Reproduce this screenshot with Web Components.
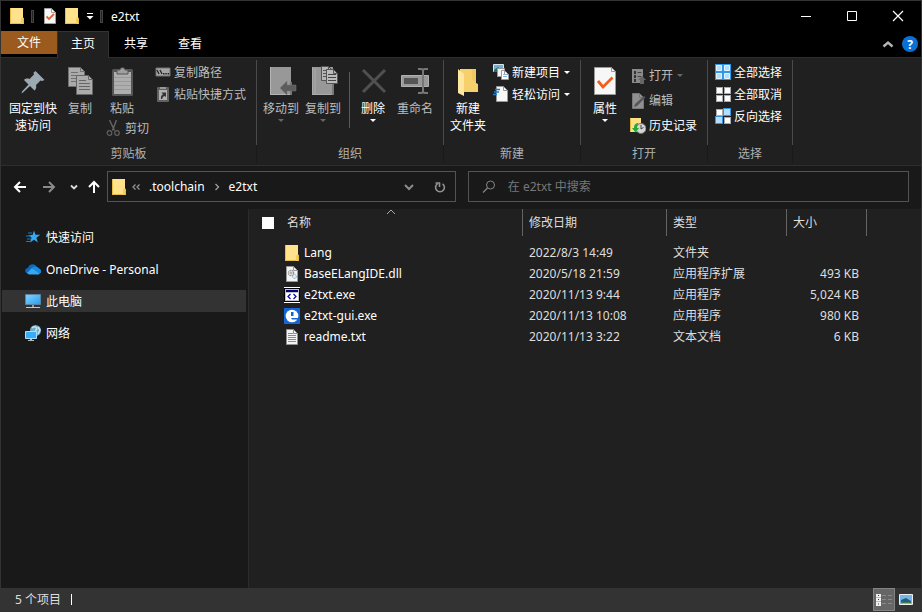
<!DOCTYPE html>
<html lang="zh-CN">
<head>
<meta charset="utf-8">
<meta name="viewport" content="width=device-width, initial-scale=1">
<title>e2txt</title>
<style>
    :root {
        --pane: #191919;
        --surface: #202020;
        --line: #535353;
        --edge: #2e2e2e;
    }

    body {
        margin: 0;
        background: var(--pane);
        color: #fff;
        font: 12px/17px "Noto Sans", "Noto Sans CJK SC", sans-serif;
    }
</style>
</head>
<body>
<fx-window>
    <fx-titlebar slot="title">e2txt</fx-titlebar>
    <fx-tabs slot="tabs"></fx-tabs>

    <fx-ribbon slot="ribbon">
        <fx-group label="剪贴板">
            <fx-command icon="pin" class="pin">固定到快<br>速访问</fx-command>
            <fx-command icon="copy" off>复制</fx-command>
            <fx-stack class="paste">
                <fx-command icon="paste" off>粘贴</fx-command>
                <fx-command icon="cut" small off>剪切</fx-command>
            </fx-stack>
            <fx-stack class="small">
                <fx-command icon="path" small off>复制路径</fx-command>
                <fx-command icon="shortcut" small off>粘贴快捷方式</fx-command>
            </fx-stack>
        </fx-group>
        <fx-group label="组织">
            <fx-command icon="moveto" menu off>移动到</fx-command>
            <fx-command icon="copyto" menu off>复制到</fx-command>
            <fx-rule></fx-rule>
            <fx-command icon="delete" menu>删除</fx-command>
            <fx-command icon="rename" off>重命名</fx-command>
        </fx-group>
        <fx-group label="新建">
            <fx-command icon="newfolder">新建<br>文件夹</fx-command>
            <fx-stack class="small">
                <fx-command icon="newitem" small menu>新建项目</fx-command>
                <fx-command icon="easy" small menu>轻松访问</fx-command>
            </fx-stack>
        </fx-group>
        <fx-group label="打开">
            <fx-command icon="props" menu>属性</fx-command>
            <fx-stack class="small loose">
                <fx-command icon="open" small menu off>打开</fx-command>
                <fx-command icon="edit" small off>编辑</fx-command>
                <fx-command icon="history" small>历史记录</fx-command>
            </fx-stack>
        </fx-group>
        <fx-group label="选择">
            <fx-stack class="small">
                <fx-command icon="all" small>全部选择</fx-command>
                <fx-command icon="none" small>全部取消</fx-command>
                <fx-command icon="invert" small>反向选择</fx-command>
            </fx-stack>
        </fx-group>
    </fx-ribbon>

    <fx-addressbar slot="address"></fx-addressbar>

    <fx-nav slot="nav">
        <fx-nav-item icon="star">快速访问</fx-nav-item>
        <fx-nav-item icon="cloud">OneDrive - Personal</fx-nav-item>
        <fx-nav-item icon="pc" current>此电脑</fx-nav-item>
        <fx-nav-item icon="network">网络</fx-nav-item>
    </fx-nav>

    <fx-files slot="files"></fx-files>
    <fx-status slot="status">5 个项目</fx-status>
</fx-window>

<script>
const page = (x, y, w, h, fill, stroke) =>
    `<path d="M${x + .5} ${y + .5}h${w - 5}l4 4v${h - 5}h-${w - 1}z" fill="${fill}" stroke="${stroke}"/><path d="M${x + w - 4.5} ${y + .5}v4h4" fill="none" stroke="${stroke}"/>`

const tile = (x, y, on) =>
    `<rect x="${x + .5}" y="${y + .5}" width="6" height="6" fill="${on ? '#b5defc' : '#fff'}" stroke="${on ? '#3297e8' : '#aaa'}"/>`

// name: [width, height, markup]
const ICONS = {
    folder: [16, 16, `<path d="M1 0h13v10h1v6H1z" fill="#ffe28b"/><path d="M1.500 0v15.500h12v-5.500h1v6" fill="none" stroke="#e8bd43"/><path d="M12 10h2v6h-2z" fill="#f3cd5c"/>`],
    check: [16, 16, `${page(2, 0, 12, 16, '#f7f7f7', '#a0a0a0')}<path d="M4.500 8.500l2.500 2.500 5-5" fill="none" stroke="#e8622c" stroke-width="1.800"/>`],
    quick: [8, 8, `<path d="M1 1.500h6" stroke="#fff"/><path d="M0.500 4h7L4 7.500z" fill="#fff"/>`],
    min: [12, 12, `<path d="M1 6.500h10" stroke="#fff"/>`],
    max: [12, 12, `<path d="M1.500 1.500h9v9h-9z" fill="none" stroke="#fff"/>`],
    close: [12, 12, `<path d="M1 1l10 10M11 1L1 11" stroke="#fff" stroke-width="1.200"/>`],
    collapse: [12, 12, `<path d="M1.500 8.500L6 4.500l4.500 4" fill="none" stroke="#b5b5b5" stroke-width="2.400"/>`],
    pin: [32, 32, `<path d="M23.500 5l9 9-2.500 1-1.500-.5-4.500 4.500c.7 2.500 0 4.300-1.500 5.500l-4.500-4.500-7 6.500-1.500 1 .5-2 6.500-7-4.500-4.500c1.500-1.500 3.500-1.800 5.500-1l4.500-4.500-.5-1.700z" transform="translate(-5 0)" fill="#9aa9b2"/>`],
    copy: [32, 32, `${page(4, 1, 17, 20, '#ababab', '#707070')}<path d="M7 6.500h7M7 9.500h10M7 12.500h10M7 15.500h10" stroke="#707070"/>${page(12, 9, 17, 20, '#ababab', '#666')}<path d="M15 14.500h7M15 17.500h11M15 20.500h11M15 23.500h11" stroke="#666"/>`],
    paste: [32, 32, `<rect x="6" y="3" width="21" height="27" rx="1.500" fill="#555"/><path d="M8 6h17v22H8z" fill="#aeaeae"/><path d="M8 11.500h17M8 15.500h17M8 19.500h17M8 23.500h17" stroke="#999"/><path d="M11 4h3c0-3 5-3 5 0h3v4H11z" fill="#a0a0a0" stroke="#555"/>`],
    moveto: [32, 32, `<path d="M5 1h21v28H5z" fill="#989898"/><path d="M5.500 1v27.500H26" fill="none" stroke="#b5b5b5"/><path d="M26 16v13" stroke="#787878" stroke-width="2"/><path d="M15 22l7-7v4h9v6h-9v4z" fill="#5d5d5d" stroke="#777" stroke-width=".5"/>`],
    copyto: [32, 32, `<path d="M5 1h21v28H5z" fill="#989898"/><path d="M5.500 1v27.500H24M8 2v26" fill="none" stroke="#ababab"/><path d="M26 16v13" stroke="#777" stroke-width="2"/>${page(14, 0, 12, 15, '#b5b5b5', '#555')}<path d="M16 4.500h3M16 7.500h3M16 10.500h3" stroke="#555"/>${page(19, 3, 12, 15, '#bbb', '#555')}<path d="M21 8.500h8M21 11.500h8M21 14.500h8" stroke="#444"/>`],
    delete: [32, 32, `<path d="M6 4l22 22M28 4L6 26" stroke="#505050" stroke-width="3"/>`],
    rename: [32, 32, `<path d="M2.500 9.500h27v11h-27z" fill="#999" stroke="#b0b0b0"/><path d="M5 12h14v6H5z" fill="#555"/><path d="M22 3h3q2 0 2 2v20q0 2-2 2h-3M32 3h-3q-2 0-2 2m0 20q0 2 2 2h3" transform="translate(-3 0)" fill="none" stroke="#777" stroke-width="2"/>`],
    newfolder: [32, 32, `<path d="M8 3h16v14l2 1v8H8z" fill="#f6d06d"/><path d="M20 3h4v14l-4-4z" fill="#f0c862"/><path d="M6 3l6 5v22l-6-3z" fill="#ffe7a0"/>`],
    props: [32, 32, `${page(5, 1, 22, 28, '#f7f7f7', '#999')}<path d="M9 15l5 6L23.500 11.500" fill="none" stroke="#f0601c" stroke-width="2.800"/>`],
    cut: [16, 16, `<path d="M3.500 0l5 10.500M10.500 0l-4 10.500" stroke="#666" stroke-width="1.400"/><circle cx="3.500" cy="13" r="2.300" fill="none" stroke="#606060" stroke-width="1.200"/><circle cx="11" cy="13" r="2.300" fill="none" stroke="#606060" stroke-width="1.200"/>`],
    path: [16, 16, `<path d="M1 4h14v8H1z" fill="#a6a6a6" stroke="#707070"/><path d="M2 6l2 4M5 6l2 4" stroke="#222" stroke-width="1.300"/><path d="M8 9h1.500v1.500H8zM10.300 9h1.500v1.500h-1.500zM12.600 9h1.500v1.500h-1.500z" fill="#222"/>`],
    shortcut: [16, 16, `<rect x="2" y="1" width="12" height="15" rx="1" fill="#606060"/><path d="M4 4h8v10H4z" fill="#b0b0b0"/><path d="M5 1h6v2H5z" fill="#999"/><path d="M6 13c-.5-2.500.5-4 2-4.500L6.500 6.500H11V11L9.700 10C8 10.500 7 11.500 7.500 13z" fill="#333"/>`],
    newitem: [16, 16, `<path d="M.5.500h10v7H.5z" fill="#75aed3" stroke="#d7e5ed"/><path d="M1 6l4-3 5 5H1z" fill="#2d6d68"/><path d="M4.500 4.500h7v8h-7z" fill="#f5f5f5" stroke="#999"/>${page(8, 6, 8, 10, '#fff', '#999')}<path d="M10 10.500h4M10 12.500h4" stroke="#8fb5df"/>`],
    easy: [16, 16, `${page(3, 0, 12, 16, '#f8f8f8', '#999')}<path d="M2 3.500h5M1 6h5M0 8.500h4" stroke="#1d7bd1" stroke-width="1.400"/>`],
    open: [16, 16, `<path d="M2 1h11v14H2z" fill="#8a8a8a"/><path d="M4 3h2v3H4zM4 7h2v3H4zM4 11h2v3H4z" fill="#333"/><path d="M7.500 4.500h4M7.500 8.500h4" stroke="#444"/><path d="M12 8l4 4h-2v4h-4v-4H8z" fill="#666"/>`],
    edit: [16, 16, `${page(2, 0, 12, 16, '#909090', '#777')}<path d="M4 14l1-3L14 3l1.500 1.500L7 13z" fill="#555"/>`],
    history: [16, 16, `<path d="M0 0h11v14H0z" fill="#ffe082"/><path d="M.500.500v13" stroke="#e3b744"/><circle cx="11" cy="10.500" r="5" fill="#d5d5d5" stroke="#777"/><path d="M11 7v4l2.500-1.500" fill="none" stroke="#444"/><path d="M8.500 5C5 5 4 7.500 4 10H2l3.500 4.500L9 10H7c0-2 .5-3 1.500-5z" fill="#25a83a"/>`],
    all: [16, 16, `<path d="M0 0h16v16H0z" fill="#3297e8"/><path d="M1.500 1.500h5v5h-5zM9.500 1.500h5v5h-5zM1.500 9.500h5v5h-5zM9.500 9.500h5v5h-5z" fill="#b5defc" stroke="#e4f4ff"/>`],
    none: [16, 16, `<g transform="translate(1 1)">${tile(0, 0)}${tile(8, 0)}${tile(0, 8)}${tile(8, 8)}</g>`],
    invert: [16, 16, `${tile(1, 1)}<path d="M8.500.500h7v7h-7zM.500 8.500h7v7h-7z" fill="#b5defc" stroke="#3297e8"/>${tile(9, 9)}`],
    back: [16, 16, `<path d="M14 8H3M8 3L3 8l5 5" fill="none" stroke="#fff" stroke-width="2"/>`],
    forward: [16, 16, `<path d="M2 8h11M8 3l5 5-5 5" fill="none" stroke="#8a8a8a" stroke-width="2"/>`],
    recent: [8, 8, `<path d="M1 2.500l3 3 3-3" fill="none" stroke="#ddd" stroke-width="1.800"/>`],
    up: [16, 16, `<path d="M8 14V3M3 8l5-5 5 5" fill="none" stroke="#fff" stroke-width="2"/>`],
    crumbs: [10, 8, `<path d="M4.500 1.500L2 4l2.500 2.500M8.500 1.500L6 4l2.500 2.500" fill="none" stroke="#999" stroke-width="1.200"/>`],
    next: [8, 8, `<path d="M2.500 1L5.500 4l-3 3" fill="none" stroke="#999" stroke-width="1.400"/>`],
    down: [12, 12, `<path d="M2 4l4 4 4-4" fill="none" stroke="#8c8c8c" stroke-width="2"/>`],
    refresh: [12, 12, `<path d="M3.500 2.800A4.400 4.400 0 1 0 8.500 2.800M1.500 2h4v4" fill="none" stroke="#929292" stroke-width="1.600"/>`],
    search: [14, 14, `<circle cx="8.500" cy="5" r="4" fill="none" stroke="#858585"/><path d="M5.500 8L1 12.500" stroke="#858585" stroke-width="1.200"/>`],
    star: [16, 16, `<path d="M9 1.500l1.500 4.300h4.800l-3.900 2.900 1.400 4.800L9 10.800 5 13.500l1.500-4.800L3.500 6h4z" fill="#35a8f4"/><path d="M3 4h4M1 7h5M2 10h4M1 12.500h4" stroke="#167bc2"/>`],
    cloud: [16, 16, `<path d="M3 12.500C-.500 12-1 7.500 3 7c1-4.500 7.500-5 9-.500 4 0 5 5.500 1.500 6z" fill="#0e68bd"/><path d="M2 12l5-5 8 5.500-1.500 1H4z" fill="#36a8ee"/><path d="M7 7c2-2.500 6-1.500 6.500.500 3 .500 3.500 4 1.500 5z" fill="#168be0"/>`],
    pc: [16, 16, `<defs><linearGradient id="g" x2="1" y2="1"><stop stop-color="#8bd3fb"/><stop offset="1" stop-color="#239ff0"/></linearGradient></defs><path d="M.500 1.500h15v10H.5z" fill="url(#g)" stroke="#5584a6"/><path d="M7 12h2v2H7z" fill="#999"/><path d="M1 14.500h14" stroke="#c3ccd2"/>`],
    network: [16, 16, `<circle cx="10.500" cy="5.500" r="5.500" fill="#72a9c4"/><path d="M7 3c3-3 6 0 4 2s1 3-1 5M13 2l2 3-2 4" fill="none" stroke="#c6e6f4" stroke-width="1.500"/><path d="M.500 6.500h11v7H.5z" fill="#35aef7" stroke="#acdfff"/><path d="M5 14h2v1h2v1H3v-1h2z" fill="#bbb"/>`],
    dll: [16, 16, `${page(2, 0, 12, 16, '#f4f4f4', '#999')}<circle cx="7" cy="7" r="2.500" fill="none" stroke="#8c8c8c" stroke-width="1.500" stroke-dasharray="1.300 .7"/><circle cx="7" cy="7" r="1" fill="#999"/><circle cx="10.500" cy="10.500" r="2" fill="#d9edf8" stroke="#82a8bd" stroke-dasharray="1.200 .6"/>`],
    code: [16, 16, `<path d="M0 0h16v1H0zM0 15h16v1H0z" fill="#fff"/><path d="M0 1h16v14H0z" fill="#000"/><path d="M1 2h14v12H1z" fill="#c4c4c4"/><path d="M2 3h12v2H2z" fill="#00007f"/><path d="M2 6h12v7H2z" fill="#fff"/><path d="M6.500 7L4 9.500 6.500 12M9.500 7L12 9.500 9.500 12" fill="none" stroke="#00c" stroke-width="1.200"/>`],
    e: [16, 16, `<path d="M0 0h16v16H0z" fill="#1466d4"/><circle cx="8" cy="8" r="6.300" fill="#fff"/><path d="M7 4h2.500v4H7zM7 10h9v1.500H8z" fill="#1466d4"/>`],
    txt: [16, 16, `${page(2, 0, 12, 16, '#f4f4f4', '#909090')}<path d="M4 4.500h5M4 6.500h8M4 8.500h8M4 10.500h8M4 12.500h8" stroke="#8c8c8c"/>`],
    sort: [10, 6, `<path d="M1 5l4-4 4 4" fill="none" stroke="#aaa"/>`],
    details: [16, 14, `<path d="M0 1h5v12H0z" fill="#f2f2f2"/><path d="M0 4.500h5M0 8.500h5" stroke="#bbb"/><path d="M2 2h1v1H2zM2 6h1v1H2zM2 10.500h1v1H2z" fill="#333"/><path d="M6 2.500h4M12 2.500h4M6 6.500h4M12 6.500h4M6 10.500h4M12 10.500h4" stroke="#8a8a8a"/>`],
    large: [14, 12, `<path d="M.5.500h13v10H.5z" fill="#75b5ea" stroke="#eee"/><path d="M2 6l5-2 5 3v2H2z" fill="#255c86"/><path d="M2 8h10v1H2z" fill="#437b52"/>`]
}

const icon = name => {
    const [w, h, body] = ICONS[name]
    return `<svg width="${w}" height="${h}" viewBox="0 0 ${w} ${h}" aria-hidden="true">${body}</svg>`
}

const BASE = `
    * { box-sizing: border-box; }
    svg { display: block; flex: none; }
    button { display: flex; align-items: center; justify-content: center; margin: 0; padding: 0; border: 0; background: none; color: inherit; font: inherit; }
`

class FX_Element extends HTMLElement {
    constructor() {
        super()
        this.attachShadow({mode: 'open'})
    }

    connectedCallback() {
        const template = document.createElement('template')
        template.innerHTML = `<style>${BASE}${this.css()}</style>${this.html()}`
        this.shadowRoot.replaceChildren(template.content.cloneNode(true))
    }

    css() {
        return ''
    }

    html() {
        return '<slot></slot>'
    }
}

class FX_Window extends FX_Element {
    css() {
        return `
            :host { display: flex; flex-direction: column; box-sizing: border-box; min-height: 100vh; border: 1px solid #333; border-bottom: 0; }
            .body { flex: 1; display: grid; grid-template-columns: 248px 1fr; }
        `
    }

    html() {
        return `
            <slot name="title"></slot>
            <slot name="tabs"></slot>
            <slot name="ribbon"></slot>
            <slot name="address"></slot>
            <div class="body">
                <slot name="nav"></slot>
                <slot name="files"></slot>
            </div>
            <slot name="status"></slot>
        `
    }
}

class FX_Titlebar extends FX_Element {
    css() {
        return `
            :host { display: flex; height: 30px; background: #000; }
            .quick { flex: 1; display: flex; align-items: center; gap: 6px; padding-left: 8px; }
            .quick i { width: 3px; height: 13px; margin-right: 2px; border: 1px solid #444; background: #222; }
            .tools { display: flex; gap: 6px; }
            .window { display: flex; }
            .window button { width: 46px; }
        `
    }

    html() {
        return `
            <div class="quick">
                ${icon('folder')}<i></i>
                <div class="tools">
                    <button title="属性">${icon('check')}</button>
                    <button title="新建文件夹">${icon('folder')}</button>
                    <button title="自定义快速访问工具栏">${icon('quick')}</button>
                </div>
                <i></i><span><slot></slot></span>
            </div>
            <div class="window">
                <button title="最小化">${icon('min')}</button>
                <button title="最大化">${icon('max')}</button>
                <button title="关闭">${icon('close')}</button>
            </div>
        `
    }
}

class FX_Tabs extends FX_Element {
    css() {
        return `
            :host { display: flex; align-items: flex-start; height: 27px; box-sizing: border-box; background: linear-gradient(#000 26px, var(--edge) 26px); }
            button { width: 54px; height: 24px; }
            .file { width: 56px; height: 23px; background: #9b5a1e; }
            .current { width: 52px; height: 27px; padding-bottom: 3px; border: 1px solid #333; border-bottom: 0; background: var(--surface); }
            .tail { display: flex; align-items: center; gap: 6px; height: 26px; margin-left: auto; padding-right: 3px; }
            .tail button { width: 16px; height: 16px; }
            .help { border-radius: 50%; background: #0a70d2; font-weight: bold; }
        `
    }

    html() {
        return `
            <button class="file">文件</button>
            <button class="current">主页</button>
            <button>共享</button>
            <button>查看</button>
            <div class="tail">
                <button title="最小化功能区">${icon('collapse')}</button>
                <button class="help" title="帮助">?</button>
            </div>
        `
    }
}

class FX_Ribbon extends FX_Element {
    css() {
        return `:host { display: flex; height: 108px; box-sizing: border-box; padding: 2px 0; border-bottom: 1px solid var(--edge); background: var(--surface); }`
    }
}

class FX_Group extends FX_Element {
    css() {
        return `
            :host { display: flex; flex-direction: column; border-right: 1px solid; border-image: linear-gradient(#4a4a4a 82%, #1a1a1a 82%) 1; }
            .content { display: flex; height: 85px; padding: 1px 10px 0 3px; }
            :host([label="剪贴板"]) .content { padding-left: 6px; }
            :host([label="组织"]) .content { padding-right: 7px; }
            .label { color: #b0b0b0; text-align: center; }
        `
    }

    html() {
        return `
            <div class="content"><slot></slot></div>
            <div class="label">${this.getAttribute('label')}</div>
        `
    }
}

class FX_Stack extends FX_Element {
    css() {
        return `
            :host { display: flex; flex-direction: column; align-items: flex-start; }
            :host(.small) { padding-left: 4px; --row: 22px; }
            :host(.loose) { padding-top: 2px; --row: 25px; }
            :host(.paste) { padding-right: 2px; --row: 22px; --indent: 5px; }
        `
    }
}

class FX_Rule extends FX_Element {
    css() {
        return `:host { display: block; width: 1px; height: 56px; margin: 11px 2px 0 5px; background: #5a5a5a; }`
    }
}

class FX_Command extends FX_Element {
    css() {
        return `
            :host { display: block; }
            :host([off]) { color: #bdbdbd; }
            button { flex-direction: column; justify-content: flex-start; gap: 2px; width: 42px; padding-top: 5px; white-space: nowrap; }
            :host(.pin) button { width: 52px; }
            .arrow { border: 3px solid transparent; border-top-color: #fff; border-bottom: 0; }
            :host([off]) .arrow { border-top-color: #666; }
            :host([small]) button { flex-direction: row; gap: 3px; width: auto; height: var(--row); padding: 0 0 0 var(--indent, 0); }
            :host([small]) .arrow { margin-left: 1px; }
        `
    }

    html() {
        const disabled = this.hasAttribute('off') ? 'disabled' : ''
        const arrow = this.hasAttribute('menu') ? '<span class="arrow"></span>' : ''
        return `<button ${disabled}>${icon(this.getAttribute('icon'))}<span><slot></slot></span>${arrow}</button>`
    }
}

class FX_Addressbar extends FX_Element {
    css() {
        return `
            :host { display: flex; align-items: center; gap: 12px; height: 43px; box-sizing: border-box; padding: 0 12px 2px 11px; }
            .history { display: flex; align-items: center; gap: 13px; margin-right: -7px; }
            .history button:nth-child(4) { margin-left: -5px; }
            .box { display: flex; align-items: center; height: 31px; min-width: 0; border: 1px solid var(--line); }
            .path { flex: 11; gap: 8px; padding: 0 9px 0 3px; }
            .path button { white-space: nowrap; }
            .parents { margin-left: -4px; }
            .path .recent { margin: 0 11px 0 auto; }
            .search { flex: 14; gap: 12px; padding-left: 13px; }
            input { flex: 1; min-width: 0; padding: 0; border: 0; outline: 0; background: none; color: #fff; font: inherit; }
            input::placeholder { color: #777; opacity: 1; }
        `
    }

    html() {
        return `
            <div class="history">
                <button title="返回">${icon('back')}</button>
                <button title="前进">${icon('forward')}</button>
                <button title="最近浏览的位置">${icon('recent')}</button>
                <button title="向上">${icon('up')}</button>
            </div>
            <div class="box path">
                ${icon('folder')}
                <button class="parents" title="上级文件夹">${icon('crumbs')}</button>
                <button>.toolchain</button>
                ${icon('next')}
                <button>e2txt</button>
                <button class="recent" title="以前的位置">${icon('down')}</button>
                <button title="刷新">${icon('refresh')}</button>
            </div>
            <div class="box search">
                ${icon('search')}
                <input type="search" placeholder="在 e2txt 中搜索" aria-label="搜索">
            </div>
        `
    }
}

class FX_Nav extends FX_Element {
    css() {
        return `:host { display: flex; flex-direction: column; gap: 10px; padding: 17px 2px 0 1px; border-right: 1px solid #2b2b2b; }`
    }
}

class FX_NavItem extends FX_Element {
    css() {
        return `
            :host([current]) { background: #333; }
            a { display: flex; align-items: center; gap: 5px; height: 22px; padding-left: 23px; color: inherit; text-decoration: none; }
        `
    }

    html() {
        return `<a href="#">${icon(this.getAttribute('icon'))}<span><slot></slot></span></a>`
    }
}

const FILES = [
    ['folder', 'Lang', '2022/8/3 14:49', '文件夹', ''],
    ['dll', 'BaseELangIDE.dll', '2020/5/18 21:59', '应用程序扩展', '493 KB'],
    ['code', 'e2txt.exe', '2020/11/13 9:44', '应用程序', '5,024 KB'],
    ['e', 'e2txt-gui.exe', '2020/11/13 10:08', '应用程序', '980 KB'],
    ['txt', 'readme.txt', '2020/11/13 3:22', '文本文档', '6 KB']
]

class FX_Files extends FX_Element {
    css() {
        return `
            :host { display: block; background: var(--surface); }
            table { width: 618px; border-collapse: separate; border-spacing: 0; table-layout: fixed; color: #dedede; }
            th, td { padding: 0 8px 0 6px; text-align: left; font-weight: normal; white-space: nowrap; }
            th { position: relative; height: 27px; border-right: 1px solid #636363; }
            td { height: 21px; }
            tbody::before { content: ""; display: block; height: 6px; }
            .head, .name { display: flex; align-items: center; }
            .head { gap: 13px; padding-left: 7px; }
            .name { gap: 4px; padding-left: 29px; color: #fff; }
            .sort { position: absolute; top: 0; left: 50%; }
            .size { text-align: right; }
            input { appearance: none; width: 12px; height: 12px; margin: 0; background: #fff; }
        `
    }

    html() {
        const rows = FILES.map(([type, name, date, kind, size]) => `
            <tr>
                <td><div class="name">${icon(type)}<span>${name}</span></div></td>
                <td>${date}</td>
                <td>${kind}</td>
                <td class="size">${size}</td>
            </tr>
        `).join('')

        return `
            <table>
                <colgroup><col style="width: 274px"><col style="width: 144px"><col style="width: 120px"><col style="width: 80px"></colgroup>
                <thead>
                    <tr>
                        <th><div class="head"><input type="checkbox" id="all" aria-label="全选"><label for="all">名称</label></div><span class="sort">${icon('sort')}</span></th>
                        <th>修改日期</th>
                        <th>类型</th>
                        <th>大小</th>
                    </tr>
                </thead>
                <tbody>${rows}</tbody>
            </table>
        `
    }
}

class FX_Status extends FX_Element {
    css() {
        return `
            :host { display: flex; align-items: center; height: 24px; box-sizing: border-box; padding: 0 4px 1px 14px; background: #333; color: #ddd; }
            i { width: 1px; height: 11px; margin-left: 10px; background: #fff; }
            .views { display: flex; margin-left: auto; }
            .views button { width: 22px; height: 23px; }
            .views .on { border: 1px solid #838383; background: #666; }
        `
    }

    html() {
        return `
            <span><slot></slot></span><i></i>
            <div class="views">
                <button class="on" title="详细信息">${icon('details')}</button>
                <button title="大图标">${icon('large')}</button>
            </div>
        `
    }
}

window.customElements.define('fx-window', FX_Window)
window.customElements.define('fx-titlebar', FX_Titlebar)
window.customElements.define('fx-tabs', FX_Tabs)
window.customElements.define('fx-ribbon', FX_Ribbon)
window.customElements.define('fx-group', FX_Group)
window.customElements.define('fx-stack', FX_Stack)
window.customElements.define('fx-rule', FX_Rule)
window.customElements.define('fx-command', FX_Command)
window.customElements.define('fx-addressbar', FX_Addressbar)
window.customElements.define('fx-nav', FX_Nav)
window.customElements.define('fx-nav-item', FX_NavItem)
window.customElements.define('fx-files', FX_Files)
window.customElements.define('fx-status', FX_Status)
</script>
</body>
</html>
